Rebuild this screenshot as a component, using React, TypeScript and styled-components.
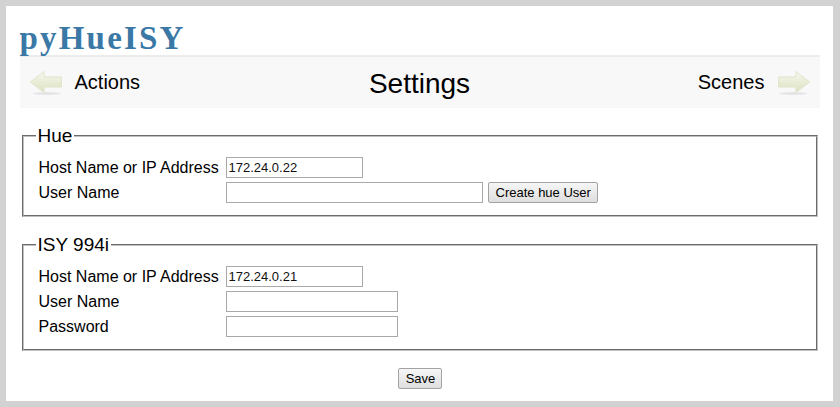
import * as React from 'react'

import styled, { createGlobalStyle } from 'styled-components'

const GlobalStyle = createGlobalStyle`
  body {
    margin: 0;
    background: #d2d2d2;
    font-family: "Liberation Sans", Arial, sans-serif;
    color: #000;
  }
`

const Frame = styled.div`
  margin: 6px 7px 6px 6px;
  height: 395px;
  background: #fff;
`

const Content = styled.div`
  width: 800px;
  margin: 0 auto;
`

const Title = styled.h1`
  margin: 0;
  padding-top: 16px;
  height: 33px;
  line-height: 33px;
  font-family: "Liberation Serif", "Times New Roman", serif;
  font-size: 33px;
  font-weight: bold;
  letter-spacing: 2.2px;
  color: #3a78a6;
`

const Nav = styled.div`
  display: grid;
  grid-template-columns: 1fr auto 1fr;
  align-items: center;
  height: 51px;
  padding: 0 10px;
  border-top: 2px solid #ececec;
  background: #f8f8f8;
`

const NavLink = styled.div<{ $right?: boolean }>`
  display: flex;
  align-items: center;
  justify-content: ${p => (p.$right ? 'flex-end' : 'flex-start')};
  gap: 13px;
  font-size: 20px;
`

const PageName = styled.div`
  font-size: 28px;
  padding-top: 2px;
`

const Form = styled.form`
  padding-top: 17px;
`

const Group = styled.fieldset`
  margin: 0 2px 17px;
  padding: 8px 12px 10px;
  border: 2px groove #c0c0c0;
`

const Legend = styled.legend`
  padding: 0 2px;
  font-size: 19px;
`

const Row = styled.div`
  display: flex;
  align-items: center;
  height: 25px;
`

const Label = styled.label`
  width: 187px;
  padding-left: 3px;
  font-size: 16px;
`

const Input = styled.input<{ $w: number }>`
  box-sizing: border-box;
  width: ${p => p.$w}px;
  height: 21px;
  margin: 0;
  padding: 1px 2px;
  border: 1px solid #a9a9a9;
  font-family: "Liberation Sans", Arial, sans-serif;
  font-size: 13px;
  color: #111;
`

const Button = styled.button`
  box-sizing: border-box;
  height: 21px;
  margin: 0 0 0 5px;
  padding: 0 6px 0 7px;
  border: 1px solid #a3a3a3;
  border-radius: 2px;
  background: linear-gradient(#f6f6f6, #dedede);
  font-family: "Liberation Sans", Arial, sans-serif;
  font-size: 13px;
  color: #000;
`

const Footer = styled.div`
  display: flex;
  justify-content: center;
  padding-left: 1px;

  ${Button} {
    margin: 0;
  }
`

const Arrow = ({ dir }: { dir: 'left' | 'right' }) => (
  <svg width="32" height="24" viewBox="0 0 32 24" style={{ transform: dir === 'right' ? 'scaleX(-1)' : undefined }}>
    <defs>
      <linearGradient id={`ag-${dir}`} x1="0" y1="0" x2="0" y2="1">
        <stop offset="0" stopColor="#f7f8ee" />
        <stop offset="0.6" stopColor="#e6ead2" />
        <stop offset="1" stopColor="#dde2c4" />
      </linearGradient>
    </defs>
    <ellipse cx="17" cy="22.5" rx="14" ry="1.5" fill="#e4e4e4" />
    <path
      d="M0.5 11 L14 0.5 L14 6 L31.5 6 L31.5 16 L14 16 L14 21.5 Z"
      fill={`url(#ag-${dir})`}
      stroke="#e0e4cc"
      strokeWidth="1"
    />
  </svg>
)

export default function App() {
  return (
    <>
      <GlobalStyle />
      <Frame>
        <Content>
          <Title>pyHueISY</Title>
          <Nav>
            <NavLink>
              <Arrow dir="left" />
              Actions
            </NavLink>
            <PageName>Settings</PageName>
            <NavLink $right>
              Scenes
              <Arrow dir="right" />
            </NavLink>
          </Nav>
          <Form onSubmit={e => e.preventDefault()}>
            <Group>
              <Legend>Hue</Legend>
              <Row>
                <Label>Host Name or IP Address</Label>
                <Input $w={137} defaultValue="172.24.0.22" />
              </Row>
              <Row>
                <Label>User Name</Label>
                <Input $w={257} />
                <Button type="button">Create hue User</Button>
              </Row>
            </Group>
            <Group>
              <Legend>ISY 994i</Legend>
              <Row>
                <Label>Host Name or IP Address</Label>
                <Input $w={137} defaultValue="172.24.0.21" />
              </Row>
              <Row>
                <Label>User Name</Label>
                <Input $w={172} />
              </Row>
              <Row>
                <Label>Password</Label>
                <Input $w={172} type="password" />
              </Row>
            </Group>
            <Footer>
              <Button type="button">Save</Button>
            </Footer>
          </Form>
        </Content>
      </Frame>
    </>
  )
}
